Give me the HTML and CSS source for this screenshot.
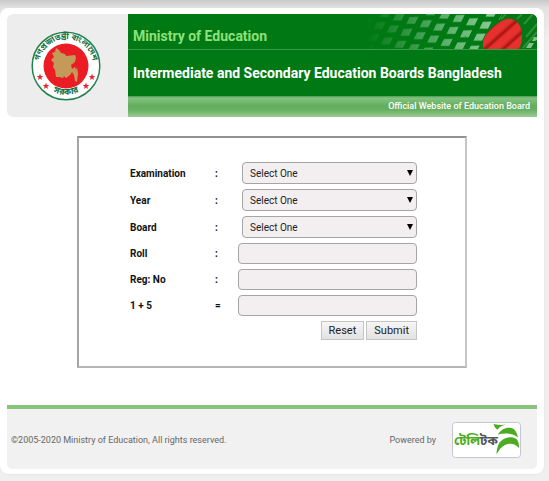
FILE: index.html
```html
<!DOCTYPE html>
<html lang="en">
<head>
<meta charset="utf-8">
<meta name="viewport" content="width=device-width, initial-scale=1">
<title>Intermediate and Secondary Education Boards Bangladesh</title>
<link rel="stylesheet" href="styles.css">
</head>
<body>
<div class="page">
  <header class="header">
    <div class="seal-cell">
      <svg class="seal" viewBox="0 0 70 70" role="img" aria-label="Government seal">
        <defs>
          <path id="arc-top" d="M9.500 44A27 27 0 1 1 60.500 44"/>
          <path id="arc-bottom" d="M7 46A31 31 0 0 0 63 46"/>
          <path id="star" d="M0-3.400L.9-1.100 3.300-1 1.400.5 2 2.900 0 1.500-2 2.900-1.400.5-3.300-1-.9-1.100z"/>
        </defs>
        <circle cx="35" cy="35" r="33.800" fill="#fff" stroke="#23824f" stroke-width="1.500"/>
        <circle cx="35" cy="35" r="22.500" fill="#ec1c24"/>
        <path fill="#c49a58" d="M25 17l3 2 2 3 4 1 1 2 9-1 1 3-1 4-4 3 1 4 3-2 1 3 1-3 1 7-1 8-2-1-1-6-2-3-2 3-4 3-2-2-1 2-4-1-3 0-1-7-2-3 1-4-3-3 3-3-2-4 3-1z"/>
        <g class="seal-text">
          <text><textPath href="#arc-top" startOffset="50%" text-anchor="middle">গণপ্রজাতন্ত্রী বাংলাদেশ</textPath></text>
          <text class="seal-base"><textPath href="#arc-bottom" startOffset="50%" text-anchor="middle">সরকার</textPath></text>
        </g>
        <g fill="#e8252c">
          <use href="#star" x="9" y="46"/><use href="#star" x="15" y="55"/>
          <use href="#star" x="61" y="46"/><use href="#star" x="55" y="55"/>
        </g>
      </svg>
    </div>
    <div class="banner">
      <div class="ministry">
        <span>Ministry of Education</span>
        <svg class="flag" viewBox="0 0 190 35" aria-hidden="true">
          <defs>
            <pattern id="tiles" width="14" height="12" patternUnits="userSpaceOnUse" patternTransform="matrix(.96 .24 -.5 1 3 -3)">
              <path d="M2 4l8-2v7l-8 2z" fill="#86c892"/>
            </pattern>
            <linearGradient id="fade"><stop offset=".1" stop-color="#000"/><stop offset=".5" stop-color="#aaa"/><stop offset=".75" stop-color="#fff"/></linearGradient>
            <mask id="tile-mask"><rect width="190" height="35" fill="url(#fade)"/></mask>
            <linearGradient id="silk" x1="0" y1="0" x2="8" y2="9" gradientUnits="userSpaceOnUse" spreadMethod="repeat">
              <stop stop-color="#e8302e"/><stop offset=".5" stop-color="#e5322e"/><stop offset=".8" stop-color="#a51412"/><stop offset="1" stop-color="#e8302e"/>
            </linearGradient>
          </defs>
          <rect width="190" height="35" fill="url(#tiles)" mask="url(#tile-mask)"/>
          <path d="M155 0h35v35h-50z" fill="#067514"/>
          <g stroke="#3d9c48" stroke-width="2" opacity=".7"><path d="M154 5l5-5M170 5l5-5M177 10l9-10M179 23l11-13M176 34l14-16"/></g>
          <path d="M182 29h5l-3 5h-5zM187 23h3v3l-2 1h-3z" fill="#82bf8a"/>
          <path d="M136 35c-1-8 2-15 8-20 6-6 14-11 20-10 7 1 11 8 11 16 0 6-1 10-3 14z" fill="url(#silk)"/>
        </svg>
      </div>
      <h1 class="title">Intermediate and Secondary Education Boards Bangladesh</h1>
      <p class="official">Official Website of Education Board</p>
    </div>
  </header>

  <main class="main">
    <form class="form">
      <div class="row">
        <label for="exam">Examination</label><span class="sep">:</span>
        <span class="select"><select id="exam"><option>Select One</option></select></span>
      </div>
      <div class="row">
        <label for="year">Year</label><span class="sep">:</span>
        <span class="select"><select id="year"><option>Select One</option></select></span>
      </div>
      <div class="row">
        <label for="board">Board</label><span class="sep">:</span>
        <span class="select"><select id="board"><option>Select One</option></select></span>
      </div>
      <div class="row">
        <label for="roll">Roll</label><span class="sep">:</span>
        <input id="roll" type="text">
      </div>
      <div class="row">
        <label for="reg">Reg: No</label><span class="sep">:</span>
        <input id="reg" type="text">
      </div>
      <div class="row">
        <label for="sum">1 + 5</label><span class="sep">=</span>
        <input id="sum" type="text">
      </div>
      <div class="actions">
        <button type="reset">Reset</button>
        <button type="submit">Submit</button>
      </div>
    </form>
  </main>

  <footer class="footer">
    <p class="copyright">©2005-2020 Ministry of Education, All rights reserved.</p>
    <div class="powered">
      <span>Powered by</span>
      <svg class="teletalk" viewBox="0 0 69 36" role="img" aria-label="Teletalk">
        <rect x=".5" y=".5" width="68" height="35" rx="3" fill="#fff" stroke="#c3c6d0"/>
        <text class="brand" x="2" y="23"><tspan fill="#4bab22">টেলি</tspan><tspan fill="#54565c">টক</tspan></text>
        <g fill="#4cab20">
          <path d="M41.500 2c4 1 8 1 12 .8-4 1-6 2-8 5-2-1-3-3-4-5.800z"/>
          <path d="M46 12.500c3-5 9-8 15-6 3 2 4 5 5 9-5-4-12-5-20-3z"/>
          <path d="M47.500 20.500c4-5 12-7 17-3.500 2 2 2.500 5 2.500 9-4-4.500-9-5.500-14-3-4 2-6 5-8.500 9.500 0-5 1-8 3-12z"/>
        </g>
      </svg>
    </div>
  </footer>
</div>
</body>
</html>
```
FILE: styles.css
```css
* { box-sizing: border-box; }

body {
  margin: 0;
  padding: 8px 5px 7px 0;
  min-height: 100vh;
  background: #efefef linear-gradient(#c9c9c9, #e2e2e2 8px, #efefef 40px) no-repeat;
  font-family: Roboto, "Liberation Sans", sans-serif;
  font-size: 10px;
  color: #111;
}

h1, p { margin: 0; }

.page {
  padding: 6px 7px 5px;
  background: #fff;
  border-radius: 8px;
  box-shadow: 0 0 2px #ddd;
}

.header {
  display: grid;
  grid-template-columns: 121px 1fr;
  border-radius: 6px 6px 0 6px;
  overflow: hidden;
}

.seal-cell {
  display: grid;
  place-items: center;
  padding-right: 3px;
  background: #ededed;
}

.seal { width: 70px; }

.seal-text {
  font-family: "Noto Sans Bengali", "Noto Serif Bengali", FreeSans, sans-serif;
  font-size: 8px;
  font-weight: bold;
  fill: #176f43;
}

.seal-base { font-size: 9px; }

.banner { background: #007914; }

.ministry {
  display: flex;
  justify-content: space-between;
  height: 36px;
  padding-left: 5px;
  border-bottom: 1px solid #3c9a4a;
  color: #8ee07a;
  font-size: 14px;
  font-weight: 700;
  line-height: 44px;
}

.flag { width: 190px; height: 35px; }

.title {
  padding-left: 5px;
  color: #fff;
  font-size: 14px;
  font-weight: 700;
  line-height: 46px;
}

.official {
  padding-right: 7px;
  background: linear-gradient(#4a9d4c, #83c283 2px, #63ad5c 10px, #68b063 14px, #9ccb98);
  color: #fff;
  font-size: 9px;
  font-weight: 500;
  line-height: 21px;
  text-align: right;
}

.main {
  padding: 19px 70px 37px;
}

.form {
  display: grid;
  gap: 5px;
  padding: 24px 48px 26px 51px;
  border: 2px solid;
  border-color: #929292 #c6c6c6 #b5b5b5 #a5a5a5;
}

.row {
  display: grid;
  grid-template-columns: 85px 23px 1fr;
  align-items: center;
  font-weight: 700;
}

.select {
  display: grid;
  align-items: center;
  margin-left: 4px;
}

.select select,
.select::after { grid-area: 1 / 1; }

.select::after {
  content: "";
  justify-self: end;
  width: 6px;
  height: 6px;
  margin-right: 4px;
  background: #000;
  clip-path: polygon(0 0, 100% 0, 50% 100%);
  pointer-events: none;
}

.form select,
.form input {
  width: 100%;
  height: 21px;
  border: 1px solid #a5a5a5;
  border-radius: 4px;
  background: #f3eff1;
  color: #222;
  font-family: inherit;
  font-size: 10px;
}

.form select {
  appearance: none;
  height: 22px;
  padding: 0 7px;
}

.actions {
  display: flex;
  justify-content: flex-end;
  gap: 2px;
}

.actions button {
  height: 19px;
  padding: 0 7px;
  border: 1px solid #c4c4c4;
  background: linear-gradient(#f6f6f6, #e2e2e2);
  color: #222;
  font-family: inherit;
  font-size: 11px;
}

.footer {
  display: flex;
  justify-content: space-between;
  align-items: center;
  height: 64px;
  padding: 2px 16px 0 4px;
  border-top: 4px solid #89c47c;
  border-radius: 0 0 5px 5px;
  background: #f1f1f1;
  color: #666;
  font-size: 9px;
}

.powered {
  display: flex;
  align-items: center;
  gap: 16px;
}

.teletalk { width: 69px; height: 36px; }

.brand {
  font-family: "Noto Sans Bengali", FreeSans, sans-serif;
  font-size: 13px;
  font-weight: bold;
}
```
